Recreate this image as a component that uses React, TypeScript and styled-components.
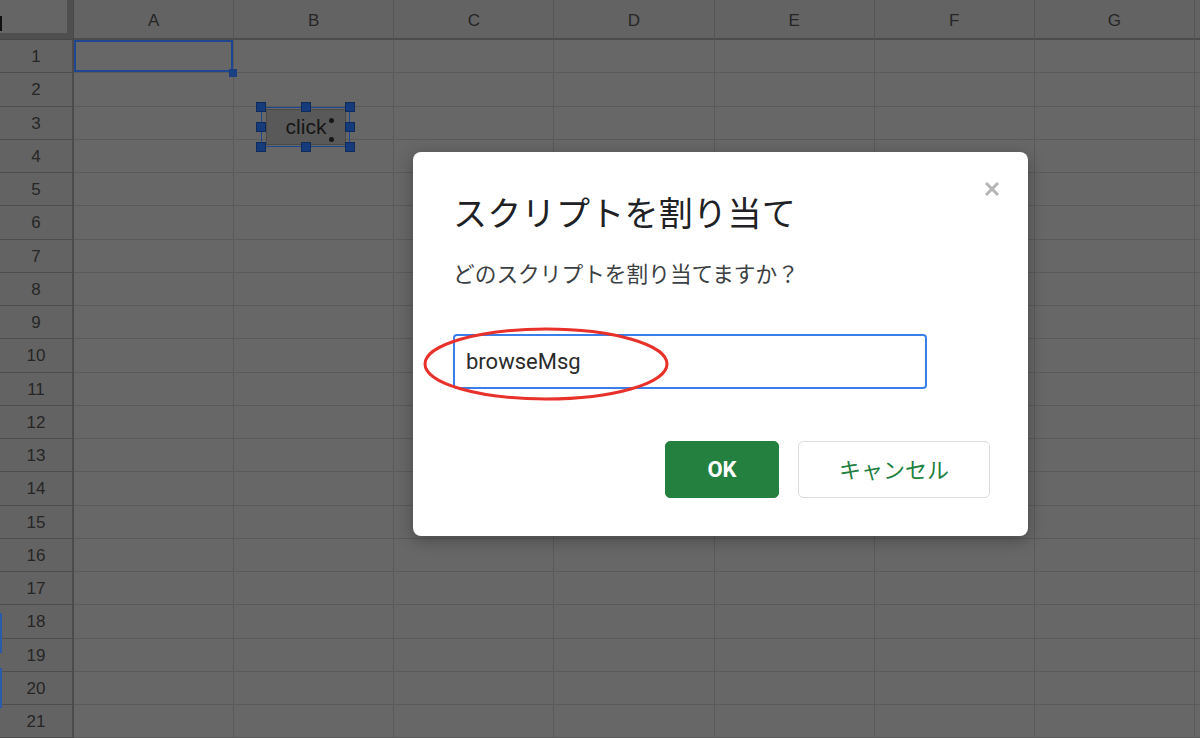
import React from 'react';
import styled, { createGlobalStyle } from 'styled-components';

const GlobalStyle = createGlobalStyle`
    html, body {
        margin: 0;
        padding: 0;
        overflow: hidden;
        background: #676767;
        font-family: 'Liberation Sans', Arial, sans-serif;
    }
`;

const Page = styled.div`
    position: relative;
    width: 1200px;
    height: 738px;
    overflow: hidden;
`;

const Sheet = styled.div`
    position: relative;
    display: grid;
    grid-template-columns: 74px repeat(8, 160.15px);
    grid-template-rows: 40px repeat(21, 33.25px);
    background: #676767;
`;

const Corner = styled.div`
    position: relative;
    background: #4f4f4f;
    border-right: 1px solid #474747;
    border-bottom: 1px solid #474747;

    &::before {
        content: '';
        position: absolute;
        left: 0;
        top: 0;
        width: 67px;
        height: 33px;
        background: #656565;
    }
`;

const ColHeader = styled.div`
    display: flex;
    align-items: center;
    justify-content: center;
    padding-top: 3px;
    background: #636363;
    border-right: 1px solid #555555;
    border-bottom: 2px solid #4c4c4c;
    color: #262626;
    font-size: 17px;
`;

const RowHeader = styled.div`
    display: flex;
    align-items: center;
    justify-content: center;
    padding-top: 2px;
    background: #636363;
    border-right: 2px solid #4c4c4c;
    border-bottom: 1px solid #4e4e4e;
    color: #262626;
    font-size: 17px;
`;

const Cell = styled.div<{ $selected?: boolean }>`
    position: relative;
    background: #676767;
    border-right: 1px solid #5a5a5a;
    border-bottom: 1px solid #5a5a5a;
    box-shadow: ${p => (p.$selected ? 'inset 0 0 0 2px #1f4690' : 'none')};
`;

const FillHandle = styled.div`
    position: absolute;
    right: -4px;
    bottom: -5px;
    width: 8px;
    height: 8px;
    background: #1a3f82;
    z-index: 2;
`;

const EdgeMark = styled.div<{ $top: number; $height: number; $color: string }>`
    position: absolute;
    left: 0;
    top: ${p => p.$top}px;
    width: 2px;
    height: ${p => p.$height}px;
    background: ${p => p.$color};
`;

const Drawing = styled.div`
    position: absolute;
    left: 261px;
    top: 107px;
    width: 89px;
    height: 40px;
    box-sizing: border-box;
    padding: 1px 3px 1px 4px;
    border: 1px solid #1f4690;
    display: flex;
`;

const DrawingButton = styled.div`
    position: relative;
    flex: 1;
    background: #595959;
    border: 1px solid #4a4a4a;
    display: flex;
    align-items: center;
    justify-content: center;
    color: #161616;
    font-size: 21px;
    padding-bottom: 1px;
`;

const Pointer = styled.span`
    position: absolute;
    left: 62px;
    top: 8px;
    height: 24px;
    display: flex;
    flex-direction: column;
    justify-content: space-between;

    &::before,
    &::after {
        content: '';
        width: 5px;
        height: 5px;
        border-radius: 50%;
        background: #161616;
    }
`;

const HandleGrid = styled.div`
    position: absolute;
    inset: -6px;
    display: grid;
    grid-template-columns: repeat(3, 10px);
    grid-template-rows: repeat(3, 10px);
    justify-content: space-between;
    align-content: space-between;
    pointer-events: none;
`;

const Handle = styled.div<{ $hidden?: boolean }>`
    visibility: ${p => (p.$hidden ? 'hidden' : 'visible')};
    background: #163b7a;
    border: 1px solid #0f2b5c;
    box-sizing: border-box;
`;

const Dialog = styled.div`
    position: absolute;
    left: 413px;
    top: 152px;
    width: 615px;
    box-sizing: border-box;
    padding: 38px 38px 38px 40px;
    background: #ffffff;
    border-radius: 8px;
    box-shadow: 0 4px 16px rgba(0, 0, 0, 0.3);
    display: flex;
    flex-direction: column;
    z-index: 5;
`;

const Title = styled.h1`
    margin: 0;
    font-family: 'Noto Sans CJK JP', sans-serif;
    font-weight: 400;
    font-size: 34px;
    line-height: 44px;
    color: #202124;
    letter-spacing: 0.3px;
`;

const CloseButton = styled.button`
    position: absolute;
    right: 27px;
    top: 28px;
    width: 18px;
    height: 18px;
    padding: 0;
    border: none;
    background: transparent;
    cursor: pointer;
`;

const Prompt = styled.p`
    margin: 24px 0 0;
    font-family: 'Noto Sans CJK JP', sans-serif;
    font-size: 21.7px;
    line-height: 30px;
    color: #3c4043;
`;

const InputWrap = styled.div`
    position: relative;
    margin-top: 46px;
    width: 474px;
`;

const ScriptInput = styled.input`
    display: block;
    width: 100%;
    height: 55px;
    box-sizing: border-box;
    padding: 0 11px;
    border: 2px solid #3a7ee9;
    border-radius: 4px;
    outline: none;
    font-family: Roboto, 'Liberation Sans', sans-serif;
    font-size: 22px;
    color: #2b2b2b;
    background: #ffffff;
`;

const Annotation = styled.svg`
    position: absolute;
    left: -31px;
    top: -8px;
    pointer-events: none;
`;

const Actions = styled.div`
    display: flex;
    justify-content: flex-end;
    gap: 19px;
    margin-top: 52px;
`;

const ActionButton = styled.button<{ $primary?: boolean }>`
    height: 57px;
    width: ${p => (p.$primary ? '114px' : '192px')};
    padding: 0 0 ${p => (p.$primary ? '0' : '4px')};
    border-radius: 5px;
    border: 1px solid ${p => (p.$primary ? '#23803f' : '#dadce0')};
    background: ${p => (p.$primary ? '#23803f' : '#ffffff')};
    color: ${p => (p.$primary ? '#ffffff' : '#23803f')};
    font-family: ${p => (p.$primary ? "Roboto, 'Liberation Sans', sans-serif" : "'Noto Sans CJK JP', sans-serif")};
    font-weight: ${p => (p.$primary ? 700 : 400)};
    font-size: 22px;
    cursor: pointer;
`;

const columns = ['A', 'B', 'C', 'D', 'E', 'F', 'G', ''];
const rows = Array.from({ length: 21 }, (_, i) => i + 1);

const App: React.FC = () => {
    return (
        <Page>
            <GlobalStyle />
            <Sheet>
                <Corner />
                {columns.map((c, i) => (
                    <ColHeader key={i}>{c}</ColHeader>
                ))}
                {rows.map(r => (
                    <React.Fragment key={r}>
                        <RowHeader>{r}</RowHeader>
                        {columns.map((_, ci) => (
                            <Cell key={ci} $selected={r === 1 && ci === 0}>
                                {r === 1 && ci === 0 && <FillHandle />}
                            </Cell>
                        ))}
                    </React.Fragment>
                ))}

                <Drawing>
                    <DrawingButton>
                        click
                        <Pointer />
                    </DrawingButton>
                    <HandleGrid>
                        {Array.from({ length: 9 }, (_, i) => (
                            <Handle key={i} $hidden={i === 4} />
                        ))}
                    </HandleGrid>
                </Drawing>

                <EdgeMark $top={16} $height={15} $color="#111111" />
                <EdgeMark $top={613} $height={40} $color="#2a5aa8" />
                <EdgeMark $top={668} $height={40} $color="#2a5aa8" />
            </Sheet>

            <Dialog>
                <Title>スクリプトを割り当て</Title>
                <CloseButton aria-label="閉じる">
                    <svg width="18" height="18" viewBox="0 0 18 18">
                        <path d="M3 3 L15 15 M15 3 L3 15" stroke="#b5b5b5" strokeWidth="3" />
                    </svg>
                </CloseButton>
                <Prompt>どのスクリプトを割り当てますか？</Prompt>
                <InputWrap>
                    <ScriptInput defaultValue="browseMsg" />
                    <Annotation width="250" height="78" viewBox="0 0 250 78">
                        <ellipse cx="124" cy="38" rx="121" ry="35" fill="none" stroke="#e8312a" strokeWidth="3" />
                    </Annotation>
                </InputWrap>
                <Actions>
                    <ActionButton $primary>OK</ActionButton>
                    <ActionButton>キャンセル</ActionButton>
                </Actions>
            </Dialog>
        </Page>
    );
};

export default App;
